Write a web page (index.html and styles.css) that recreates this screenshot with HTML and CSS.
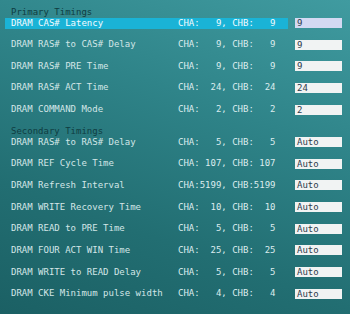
FILE: index.html
```html
<!DOCTYPE html>
<html lang="en">
<head>
    <meta charset="UTF-8" />
    <title>DRAM Timings</title>
    <link rel="stylesheet" href="styles.css">
</head>
<body>
    <div class="screen">
        <div class="section-title">Primary Timings</div>
        <div class="row active">
            <div class="bar"><span class="label">DRAM CAS# Latency</span><span class="value">CHA:   9, CHB:   9</span></div>
            <div class="field">9</div>
        </div>
        <div class="row">
            <div class="bar"><span class="label">DRAM RAS# to CAS# Delay</span><span class="value">CHA:   9, CHB:   9</span></div>
            <div class="field">9</div>
        </div>
        <div class="row">
            <div class="bar"><span class="label">DRAM RAS# PRE Time</span><span class="value">CHA:   9, CHB:   9</span></div>
            <div class="field">9</div>
        </div>
        <div class="row">
            <div class="bar"><span class="label">DRAM RAS# ACT Time</span><span class="value">CHA:  24, CHB:  24</span></div>
            <div class="field">24</div>
        </div>
        <div class="row">
            <div class="bar"><span class="label">DRAM COMMAND Mode</span><span class="value">CHA:   2, CHB:   2</span></div>
            <div class="field">2</div>
        </div>

        <div class="section-title second">Secondary Timings</div>
        <div class="row">
            <div class="bar"><span class="label">DRAM RAS# to RAS# Delay</span><span class="value">CHA:   5, CHB:   5</span></div>
            <div class="field">Auto</div>
        </div>
        <div class="row">
            <div class="bar"><span class="label">DRAM REF Cycle Time</span><span class="value">CHA: 107, CHB: 107</span></div>
            <div class="field">Auto</div>
        </div>
        <div class="row">
            <div class="bar"><span class="label">DRAM Refresh Interval</span><span class="value">CHA:5199, CHB:5199</span></div>
            <div class="field">Auto</div>
        </div>
        <div class="row">
            <div class="bar"><span class="label">DRAM WRITE Recovery Time</span><span class="value">CHA:  10, CHB:  10</span></div>
            <div class="field">Auto</div>
        </div>
        <div class="row">
            <div class="bar"><span class="label">DRAM READ to PRE Time</span><span class="value">CHA:   5, CHB:   5</span></div>
            <div class="field">Auto</div>
        </div>
        <div class="row">
            <div class="bar"><span class="label">DRAM FOUR ACT WIN Time</span><span class="value">CHA:  25, CHB:  25</span></div>
            <div class="field">Auto</div>
        </div>
        <div class="row">
            <div class="bar"><span class="label">DRAM WRITE to READ Delay</span><span class="value">CHA:   5, CHB:   5</span></div>
            <div class="field">Auto</div>
        </div>
        <div class="row">
            <div class="bar"><span class="label">DRAM CKE Minimum pulse width</span><span class="value">CHA:   4, CHB:   4</span></div>
            <div class="field">Auto</div>
        </div>
    </div>
</body>
</html>
```

FILE: styles.css
```css
html, body {
    margin: 0;
    height: 100%;
}
body {
    background: linear-gradient(200deg, #409ba0 0%, #2f8489 35%, #226e72 70%, #1b6064 100%);
    font-family: "DejaVu Sans Mono", "Liberation Mono", monospace;
    font-size: 9px;
    color: #d3e6e7;
    overflow: hidden;
}
.screen {
    padding-top: 6.5px;
    display: flex;
    flex-direction: column;
}
.section-title {
    height: 11px;
    line-height: 11px;
    padding-left: 11px;
    color: #0f3c41;
}
.section-title.second {
    margin-top: 10.6px;
}
.row {
    display: flex;
    align-items: center;
    height: 11px;
}
.row + .row {
    margin-top: 10.65px;
}
.bar {
    margin-left: 5px;
    width: 283px;
    height: 11px;
    line-height: 11px;
    padding-left: 6px;
    box-sizing: border-box;
    display: grid;
    grid-template-columns: 167px 1fr;
}
.value {
    white-space: pre;
    color: #dcecee;
}
.row.active .bar {
    background: #1ab3d6;
    color: #f4fbff;
}
.row.active .value {
    color: #f4fbff;
}
.field {
    margin-left: 7px;
    width: 47px;
    height: 10px;
    line-height: 10px;
    padding-left: 2px;
    box-sizing: border-box;
    background: #f1f3f3;
    color: #2e3b4c;
}
.row.active .field {
    background: #d3d9f2;
}
```
